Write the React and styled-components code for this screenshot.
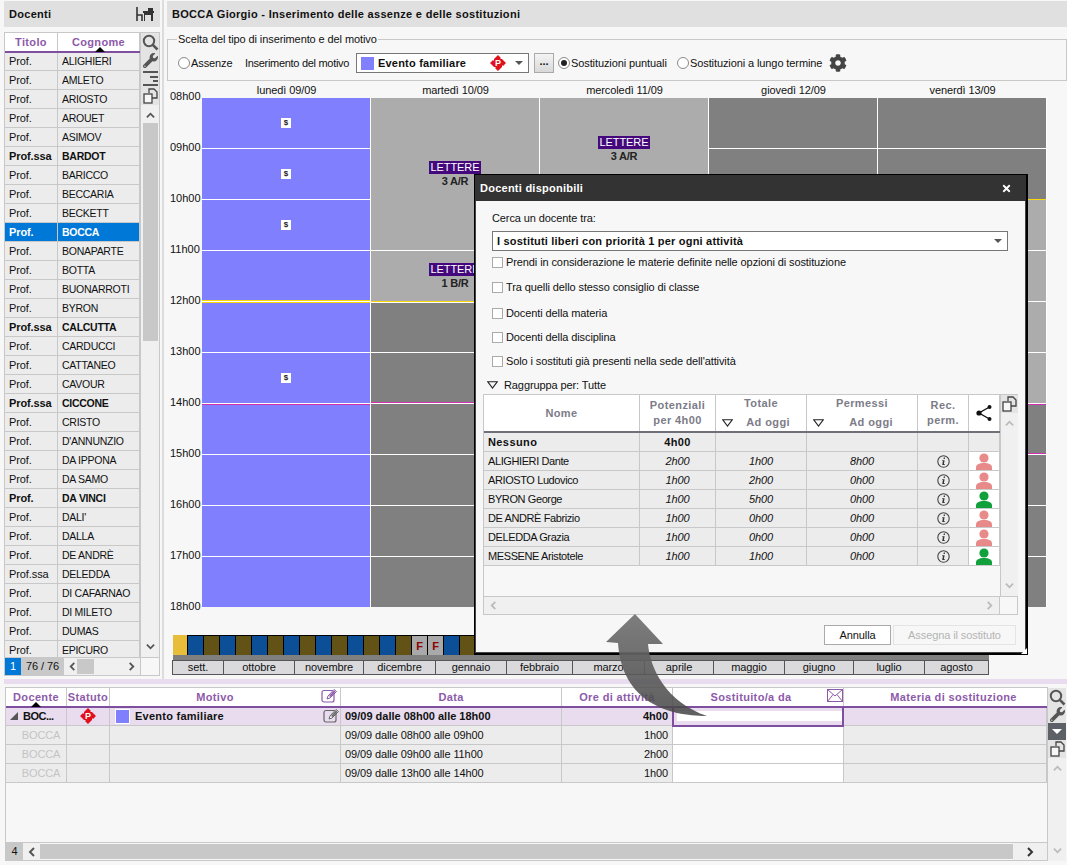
import React from 'react';
import styled, { createGlobalStyle } from 'styled-components';
import { FaWrench, FaCog, FaTimes } from 'react-icons/fa';

const GlobalStyle = createGlobalStyle`
  html, body {
    margin: 0;
    background: #f7f7f7;
  }
  * {
    box-sizing: border-box;
  }
  body {
    font-family: "Liberation Sans", Arial, sans-serif;
    font-size: 11px;
    letter-spacing: -0.1px;
    color: #111;
  }
`;

const PURPLE = '#7f4f9f';
const PURPLE_TEXT = '#8d5aaa';
const LINE = '#c8c8c8';
const ROW = '#ececec';

const Page = styled.div`
  position: relative;
  width: 1067px;
  height: 865px;
  overflow: hidden;
  background: #f7f7f7;
`;

const TopArea = styled.div`
  display: flex;
  height: 679px;
  padding-top: 1px;
`;

/* left list */
const LeftPanel = styled.div`
  width: 156px;
  margin-left: 4px;
  display: flex;
  flex-direction: column;
`;

const PanelTitle = styled.div`
  height: 26px;
  flex: none;
  background: #e0e0e0;
  display: flex;
  align-items: center;
  justify-content: space-between;
  padding: 0 6px 0 5px;
  font-weight: bold;
  letter-spacing: 0.3px;
`;

const ListFrame = styled.div`
  margin-top: 5px;
  height: 644px;
  flex: none;
  border: 1px solid ${LINE};
  display: flex;
  flex-direction: column;
`;

const ListMain = styled.div`
  flex: 1;
  display: flex;
  min-height: 0;
`;

const ListTable = styled.div`
  width: 136px;
  flex: none;
  overflow: hidden;
  border-right: 1px solid ${LINE};
`;

const ListHead = styled.div`
  position: relative;
  z-index: 1;
  display: grid;
  grid-template-columns: 53px 82px;
  height: 19px;
  background: #fff;
  border-bottom: 1px solid ${PURPLE};
  box-shadow: 0 1px 0 ${PURPLE};
`;

const HeadLabel = styled.div`
  position: relative;
  display: flex;
  align-items: center;
  justify-content: center;
  padding: 0 ${(p) => p.$pr || 0}px 0 ${(p) => p.$pl || 0}px;
  color: ${PURPLE_TEXT};
  border-right: 1px solid ${LINE};
  font-weight: bold;
  letter-spacing: 0.35px;
  white-space: nowrap;
`;

const SortCaret = styled.span`
  position: absolute;
  left: ${(p) => p.$left}px;
  bottom: -1px;
  width: 0;
  height: 0;
  border-left: 5px solid transparent;
  border-right: 5px solid transparent;
  border-bottom: 5px solid #000;
`;

const ListRow = styled.div`
  display: grid;
  grid-template-columns: 53px 82px;
  height: 19px;
  background: ${(p) => (p.$selected ? '#0078d7' : ROW)};
  color: ${(p) => (p.$selected ? '#fff' : '#111')};
  font-weight: ${(p) => (p.$bold || p.$selected ? 'bold' : 'normal')};
  border-bottom: 1px solid ${LINE};
`;

const ListCell = styled.div`
  padding-left: 4px;
  line-height: 18px;
  white-space: nowrap;
  overflow: hidden;
  border-right: 1px solid ${LINE};
`;

const NameCell = styled(ListCell)`
  font-size: 10.5px;
  letter-spacing: -0.27px;
`;

const SideColumn = styled.div`
  width: 18px;
  flex: none;
  display: flex;
  flex-direction: column;
`;

const SideButton = styled.div`
  height: ${(p) => p.$h || 18}px;
  flex: none;
  display: flex;
  align-items: center;
  justify-content: center;
  color: #555;
  background: ${(p) => (p.$dark ? '#5e6068' : '#e4e4e4')};
`;

const ScrollV = styled.div`
  flex: 1;
  display: flex;
  flex-direction: column;
  align-items: center;
  background: #f0f0f0;
  padding: 6px 0;
  min-height: 0;
`;

const ThumbV = styled.div`
  width: 15px;
  height: ${(p) => p.$h}px;
  margin-top: 3px;
  background: ${LINE};
`;

const Spacer = styled.div`
  flex: 1;
`;

const ListFooter = styled.div`
  height: 18px;
  flex: none;
  display: flex;
  align-items: stretch;
  border-top: 1px solid ${LINE};
`;

const PageNumber = styled.div`
  width: 16px;
  background: #0078d7;
  color: #fff;
  text-align: center;
  line-height: 17px;
`;

const PageCount = styled.div`
  width: 43px;
  background: ${LINE};
  text-align: center;
  line-height: 17px;
`;

const ScrollH = styled.div`
  flex: 1;
  display: flex;
  align-items: center;
  justify-content: space-between;
  padding: 0 4px;
  background: #f0f0f0;
  border-right: 1px solid ${LINE};
`;

const ThumbH = styled.div`
  width: 17px;
  height: 15px;
  background: ${LINE};
`;

const FooterEnd = styled.div`
  width: 18px;
  flex: none;
`;

const VSeparator = styled.div`
  width: 2px;
  margin: -1px 3px 0 2px;
  background: #dcdcdc;
`;

/* main column */
const MainPanel = styled.div`
  flex: 1;
  display: flex;
  flex-direction: column;
  min-width: 0;
`;

const GroupBox = styled.fieldset`
  margin: 5px 0 0;
  padding: 0 0 0 10px;
  height: 49px;
  flex: none;
  border: 1px solid ${LINE};
`;

const GroupLegend = styled.legend`
  padding: 0 1px;
  margin-left: -1px;
  line-height: 14px;
`;

const GroupRow = styled.div`
  display: flex;
  align-items: center;
  height: 22px;
  margin-top: 6px;
`;

const RadioMark = styled.span`
  width: 12px;
  height: 12px;
  flex: none;
  border-radius: 50%;
  border: 1px solid #8a8a8a;
  background: #fff;
  display: flex;
  align-items: center;
  justify-content: center;
  margin-right: 1px;
  margin-left: ${(p) => p.$ml || 0}px;
  &::after {
    content: '';
    width: 6px;
    height: 6px;
    border-radius: 50%;
    background: ${(p) => (p.$on ? '#222' : 'transparent')};
  }
`;

const InlineLabel = styled.span`
  width: ${(p) => p.$w}px;
  flex: none;
  letter-spacing: ${(p) => p.$spacing || '-0.1px'};
  white-space: nowrap;
`;

const SelectBox = styled.div`
  width: 173px;
  height: 20px;
  flex: none;
  background: #fff;
  border: 1px solid #777;
  display: flex;
  align-items: center;
  padding: 0 5px 0 4px;
  font-weight: bold;
  letter-spacing: 0.2px;
`;

const Swatch = styled.span`
  width: 13px;
  height: 13px;
  flex: none;
  background: #8080ff;
  margin-right: 4px;
  ${(p) => p.$framed && 'outline: 1px solid #fff;'}
`;

const SelectCaret = styled.span`
  width: 0;
  height: 0;
  margin-left: auto;
  border-left: 4px solid transparent;
  border-right: 4px solid transparent;
  border-top: 4px solid #555;
`;

const SelectCaretSlot = styled.span`
  margin-left: auto;
  display: flex;
  align-items: center;
  gap: 9px;
`;

const DotsButton = styled.div`
  width: 20px;
  height: 20px;
  flex: none;
  margin-left: 5px;
  border: 1px solid #aaa;
  background: linear-gradient(#f4f4f4, #d8d8d8);
  text-align: center;
  line-height: 14px;
  font-weight: bold;
`;

const GearSlot = styled.span`
  flex: none;
  display: flex;
`;

/* calendar */
const CalendarArea = styled.div`
  display: flex;
  flex: none;
  height: 523px;
  margin-top: 3px;
`;

const TimeColumn = styled.div`
  width: 35px;
  flex: none;
  padding: 5px 0 0 3px;
`;

const TimeLabel = styled.div`
  height: 51px;
  line-height: 14px;
  letter-spacing: 0;
`;

const DaysArea = styled.div`
  width: 845px;
  flex: none;
`;

const DayHeads = styled.div`
  display: grid;
  grid-template-columns: repeat(5, 169px);
  height: 14px;
  line-height: 13px;
  text-align: center;
`;

const DayGrid = styled.div`
  display: grid;
  grid-template-columns: repeat(5, 169px);
  height: 509px;
  overflow: hidden;
`;

const DayColumn = styled.div`
  display: flex;
  flex-direction: column;
  border-right: 1px solid #fff;
`;

const toneColors = { blue: '#8080ff', light: '#acacac', dark: '#808080' };

const CalBlock = styled.div`
  height: ${(p) => p.$hours * 51}px;
  flex: none;
  background: ${(p) => toneColors[p.$tone]};
  border-bottom: 1px solid ${(p) => p.$line || '#fff'};
  ${(p) => p.$top && `border-top: 1px solid ${p.$top};`}
  ${(p) => p.$above && `box-shadow: inset 0 -1px 0 ${p.$above};`}
  display: flex;
  flex-direction: column;
  align-items: center;
  justify-content: center;
`;

const MoneyTag = styled.span`
  width: 10px;
  height: 10px;
  background: #fff;
  color: #222;
  font-size: 8px;
  font-weight: bold;
  line-height: 10px;
  text-align: center;
`;

const SubjectTag = styled.span`
  background: #44087c;
  color: #fff;
  padding: 0 2px;
  height: 13px;
  line-height: 13px;
`;

const ClassLabel = styled.span`
  height: 13px;
  line-height: 14px;
  font-weight: bold;
  letter-spacing: -0.2px;
  color: #222;
`;

const TimelineSlot = styled.div`
  flex: none;
`;

const Timeline = styled.div`
  margin: 28px 0 0 5px;
  width: 817px;
`;

const WeekStrip = styled.div`
  display: flex;
  height: 20px;
  margin-left: 1px;
  background: #000;
  padding-top: 1px;
  overflow: hidden;
`;

const WeekStart = styled.div`
  width: 14px;
  margin-right: 1px;
  margin-top: -1px;
  flex: none;
  background: #e8bd3a;
`;

const WeekCell = styled.div`
  width: 15px;
  margin-right: 1px;
  flex: none;
  background: ${(p) => p.$bg};
  color: #8b0000;
  font-weight: bold;
  text-align: center;
  line-height: 20px;
`;

const WeekBar = styled.div`
  height: 5px;
  margin-left: 1px;
  background: #7f7f7f;
`;

const MonthRow = styled.div`
  display: grid;
  grid-template-columns: 51px 71px 69px 72px 71px 66px 72px 69px 71px 69px 71px 64px;
  height: 15px;
  border-top: 1px solid #555;
  border-bottom: 1px solid #555;
  border-left: 1px solid #555;
`;

const MonthCell = styled.div`
  background: #dadadd;
  border-right: 1px solid #555;
  text-align: center;
  line-height: 13px;
`;

const Divider = styled.div`
  height: 5px;
  background: #e8dcee;
  margin-left: 4px;
`;

/* lower table */
const BottomArea = styled.div`
  margin: 3px 0 0 5px;
  display: flex;
  height: 174px;
`;

const BottomMain = styled.div`
  width: 1043px;
  flex: none;
  display: flex;
  flex-direction: column;
  border: 1px solid ${LINE};
`;

const BOTTOM_COLS = '61px 43px 231px 221px 111px 171px 203px';

const BottomHead = styled.div`
  position: relative;
  z-index: 1;
  display: grid;
  grid-template-columns: ${BOTTOM_COLS};
  height: 19px;
  flex: none;
  background: #fff;
  border-bottom: 1px solid ${PURPLE};
  box-shadow: 0 1px 0 ${PURPLE};
`;

const BottomHeadCell = styled(HeadLabel)`
  &:last-child {
    border-right: 0;
  }
`;

const HeadIcon = styled.span`
  position: absolute;
  right: ${(p) => p.$right}px;
  top: 1px;
  display: flex;
`;

const BottomRow = styled.div`
  display: grid;
  grid-template-columns: ${BOTTOM_COLS};
  height: 19px;
  flex: none;
  background: ${(p) => (p.$active ? '#e8dcee' : ROW)};
  font-weight: ${(p) => (p.$active ? 'bold' : 'normal')};
  letter-spacing: ${(p) => (p.$active ? '0' : '-0.1px')};
  border-bottom: 1px solid ${LINE};
`;

const BottomCell = styled.div`
  position: relative;
  display: flex;
  align-items: center;
  justify-content: ${(p) => p.$justify || 'flex-start'};
  padding: 0 ${(p) => p.$padRight || 0}px 0 ${(p) => p.$pad || 0}px;
  border-right: 1px solid ${LINE};
  color: ${(p) => p.$color || 'inherit'};
  white-space: nowrap;
  overflow: hidden;
`;

const BlankCell = styled(BottomCell)`
  background: #fff;
`;

const SelectedCell = styled(BottomCell)`
  overflow: visible;
`;

const SelectedFrame = styled.div`
  position: absolute;
  z-index: 2;
  left: -1px;
  right: -1px;
  top: -1px;
  bottom: -2px;
  border: 2px solid ${PURPLE};
  padding: 3px 0 4px 3px;
  background: #e8dcee;
  &::after {
    content: '';
    display: block;
    height: 100%;
    background: #fff;
  }
`;

const RowArrow = styled.span`
  position: absolute;
  left: 4px;
  top: 5px;
  width: 0;
  height: 0;
  border-bottom: 8px solid #555;
  border-left: 8px solid transparent;
`;

const TruncatedName = styled.span`
  letter-spacing: -0.5px;
`;

const EventName = styled.span`
  margin-left: 2px;
  letter-spacing: 0.25px;
`;

const RowEdit = styled.span`
  position: absolute;
  right: 1px;
  top: 2px;
  display: flex;
`;

const EmptyArea = styled.div`
  flex: 1;
`;

const BottomScroll = styled.div`
  height: 18px;
  flex: none;
  display: flex;
  align-items: stretch;
  border-top: 1px solid ${LINE};
`;

const CountCell = styled.div`
  width: 17px;
  background: ${LINE};
  text-align: center;
  line-height: 17px;
`;

const ArrowCell = styled.div`
  width: ${(p) => p.$w || 17}px;
  flex: none;
  display: flex;
  align-items: center;
  justify-content: center;
  background: #f0f0f0;
`;

const TrackH = styled.div`
  flex: 1;
  margin: 1px 0;
  background: ${LINE};
`;

const BottomSide = styled.div`
  width: 18px;
  flex: none;
  display: flex;
  flex-direction: column;
  margin-top: 1px;
`;

const DarkCaret = styled.span`
  width: 0;
  height: 0;
  border-left: 5px solid transparent;
  border-right: 5px solid transparent;
  border-top: 5px solid #fff;
`;

/* dialog */
const Dialog = styled.div`
  position: absolute;
  left: 474px;
  top: 174px;
  width: 554px;
  height: 481px;
  display: flex;
  flex-direction: column;
  background: #f7f7f7;
  border: 1px solid #000;
  border-right-width: 2px;
  border-bottom-width: 2px;
  box-shadow: inset 0 0 0 1px #444;
`;

const DialogTitle = styled.div`
  height: 26px;
  flex: none;
  background: #333;
  color: #fff;
  font-weight: bold;
  letter-spacing: 0.25px;
  display: flex;
  align-items: center;
  justify-content: space-between;
  padding: 0 14px 0 5px;
`;

const DialogBody = styled.div`
  flex: 1;
  padding: 11px 0 0 8px;
  display: flex;
  flex-direction: column;
`;

const SearchLabel = styled.div`
  margin-left: 9px;
  height: 19px;
  line-height: 13px;
`;

const DialogSelect = styled(SelectBox)`
  width: 516px;
  margin-left: 9px;
`;

const CheckRow = styled.div`
  display: flex;
  align-items: center;
  height: ${(p) => p.$h}px;
  margin-left: 9px;
`;

const CheckMark = styled.span`
  width: 11px;
  height: 11px;
  flex: none;
  background: #fff;
  border: 1px solid #aaa;
  margin-right: 3px;
`;

const GroupToggle = styled.div`
  display: flex;
  align-items: center;
  height: 16px;
  margin: 4px 0 1px 4px;
`;

const HollowDown = styled.svg`
  flex: none;
  margin-right: ${(p) => p.$mr || 0}px;
`;

const ResultFrame = styled.div`
  width: 535px;
  height: 221px;
  flex: none;
  border: 1px solid ${LINE};
  display: flex;
  flex-direction: column;
`;

const ResultMain = styled.div`
  flex: 1;
  display: flex;
  min-height: 0;
`;

const ResultTable = styled.div`
  width: 516px;
  flex: none;
`;

const RESULT_COLS = '156px 76px 91px 111px 51px 31px';

const ResultHead = styled.div`
  display: grid;
  grid-template-columns: ${RESULT_COLS};
  height: 38px;
  background: #fff;
  border-bottom: 2px solid #6f6f78;
`;

const ResultHeadCell = styled.div`
  display: flex;
  flex-direction: column;
  align-items: center;
  justify-content: center;
  border-right: 1px solid ${LINE};
  color: #7c7c88;
  font-weight: bold;
  line-height: 15px;
  text-align: center;
  letter-spacing: 0.4px;
`;

const HeadSubRow = styled.div`
  display: flex;
  align-items: center;
  justify-content: space-between;
  width: 100%;
  padding: 0 ${(p) => p.$pr}px 0 6px;
  margin-top: 4px;
`;

const ResultRow = styled.div`
  display: grid;
  grid-template-columns: ${RESULT_COLS};
  height: 19px;
  background: ${ROW};
  border-bottom: 1px solid ${LINE};
  font-weight: ${(p) => (p.$bold ? 'bold' : 'normal')};
  letter-spacing: ${(p) => (p.$bold ? '0.4px' : '-0.1px')};
`;

const ResultCell = styled.div`
  display: flex;
  align-items: center;
  justify-content: center;
  font-style: ${(p) => (p.$italic ? 'italic' : 'normal')};
  background: ${(p) => (p.$white ? '#fff' : 'transparent')};
  border-right: 1px solid ${LINE};
`;

const ResultNameCell = styled(ResultCell)`
  justify-content: flex-start;
  padding-left: 4px;
  letter-spacing: ${(p) => (p.$bold ? '0.4px' : '-0.4px')};
`;

const ResultSide = styled.div`
  width: 18px;
  flex: none;
  display: flex;
  flex-direction: column;
  border-left: 1px solid ${LINE};
`;

const ResultScrollH = styled.div`
  height: 18px;
  flex: none;
  display: flex;
  border-top: 1px solid ${LINE};
`;

const ResultTrack = styled.div`
  width: 516px;
  flex: none;
  display: flex;
  align-items: center;
  justify-content: space-between;
  padding: 0 5px;
  background: #f0f0f0;
  border-right: 1px solid ${LINE};
`;

const DialogActions = styled.div`
  display: flex;
  justify-content: flex-end;
  gap: 2px;
  width: 533px;
  margin-top: 10px;
`;

const DialogButton = styled.div`
  width: ${(p) => p.$w}px;
  height: 20px;
  border: 1px solid ${(p) => (p.$disabled ? '#e4e4e4' : '#aaa')};
  color: ${(p) => (p.$disabled ? '#b4b4b4' : '#111')};
  background: ${(p) => (p.$disabled ? '#f7f7f7' : '#fff')};
  text-align: center;
  line-height: 18px;
`;

const ResizeGrip = styled.span`
  position: absolute;
  right: -1px;
  bottom: -1px;
  width: 0;
  height: 0;
  border-bottom: 6px solid #fff;
  border-left: 6px solid transparent;
`;

const BigArrow = styled.svg`
  position: absolute;
  left: 600px;
  top: 610px;
  z-index: 3;
  pointer-events: none;
`;

/* drawings */
const Chevron = ({ dir = 'up', color = '#555', size = 9 }) => {
  const points = {
    up: '1,7 5,3 9,7',
    down: '1,3 5,7 9,3',
    left: '7,1 3,5 7,9',
    right: '3,1 7,5 3,9',
  }[dir];
  return (
    <svg width={size} height={size} viewBox="0 0 10 10">
      <polyline points={points} fill="none" stroke={color} strokeWidth="2" />
    </svg>
  );
};

const SearchIcon = ({ size = 17 }) => (
  <svg width={size} height={size} viewBox="0 0 17 17">
    <circle cx="7" cy="7" r="5.2" fill="none" stroke="#555" strokeWidth="2" />
    <line x1="10.8" y1="10.8" x2="15.5" y2="15.5" stroke="#555" strokeWidth="2.6" />
  </svg>
);

const LinesIcon = () => (
  <svg width="17" height="16" viewBox="0 0 17 16">
    <rect x="1" y="1" width="15" height="2" fill="#555" />
    <rect x="8" y="6" width="8" height="2" fill="#555" />
    <rect x="11" y="10" width="5" height="2" fill="#555" />
    <rect x="1" y="14" width="15" height="2" fill="#555" />
  </svg>
);

const CopyIcon = () => (
  <svg width="15" height="16" viewBox="0 0 15 16">
    <path d="M6 5V1h5l3 3v6H9" fill="none" stroke="#444" strokeWidth="1.3" />
    <rect x="1" y="6" width="8" height="9" fill="#f7f7f7" stroke="#444" strokeWidth="1.3" />
  </svg>
);

const DeskIcon = () => (
  <svg width="18" height="15" viewBox="0 0 18 15">
    <path d="M1 0v14M1 8h5v6" fill="none" stroke="#333" strokeWidth="1.6" />
    <path d="M7 4h11v2h-1v8h-2V8h-6v6H8V6H7z" fill="#333" />
    <rect x="12" y="1" width="5" height="3" fill="#333" />
  </svg>
);

const StatusDiamond = () => (
  <svg width="16" height="16" viewBox="0 0 16 16">
    <path d="M8 0l3 3-1 1 2 0 4 4-3 3-1-1 0 2-4 4-3-3 1-1-2 0-4-4 3-3 1 1 0-2z" fill="#e0101c" />
    <circle cx="8" cy="7.5" r="4" fill="#e0101c" />
    <text x="8" y="11" textAnchor="middle" fontSize="9" fontWeight="bold" fill="#fff" fontFamily="Liberation Sans">P</text>
  </svg>
);

const PersonIcon = ({ color }) => (
  <svg width="16" height="17" viewBox="0 0 16 17">
    <circle cx="8" cy="5" r="4.6" fill={color} />
    <path d="M0 17v-2.5C0 11.5 3 10 8 10s8 1.500 8 4.500V17z" fill={color} />
  </svg>
);

const InfoIcon = () => (
  <svg width="13" height="13" viewBox="0 0 13 13">
    <circle cx="6.500" cy="6.500" r="5.700" fill="none" stroke="#444" strokeWidth="1.100" />
    <path d="M6.800 2.600h1.300l-.3 1.300H6.500zM5.300 5.200h2.300L6.900 9h.9l-.2.900H5.200L5.900 6H5.100z" fill="#333" />
  </svg>
);

const ShareIcon = () => (
  <svg width="16" height="18" viewBox="0 0 16 18">
    <path d="M13.500 3 3 9l10.500 6" fill="none" stroke="#111" strokeWidth="1.400" />
    <circle cx="13.500" cy="3" r="2" fill="#111" />
    <circle cx="3" cy="9" r="2.600" fill="#111" />
    <circle cx="13.500" cy="15" r="2" fill="#111" />
  </svg>
);

const EditIcon = ({ color }) => (
  <svg width="16" height="14" viewBox="0 0 16 14">
    <rect x="1" y="1.500" width="12" height="11.500" rx="2" fill="none" stroke={color} strokeWidth="1.200" />
    <path d="M6 10l1-3 6-6.500 2.500 2L9 9z" fill="#fff" stroke={color} strokeWidth="1" />
    <path d="M8 7l5-5.500 1.500 1.300L9.500 8z" fill={color} />
  </svg>
);

const MailIcon = () => (
  <svg width="16" height="13" viewBox="0 0 16 13">
    <rect x="0.500" y="0.500" width="15" height="12" fill="none" stroke={PURPLE_TEXT} />
    <path d="M.5.500 8 7l7.500-6.500M.5 12.500 6 5.500M15.500 12.500 10 5.500" fill="none" stroke={PURPLE_TEXT} />
  </svg>
);

const HollowTriangle = ({ mr }) => (
  <HollowDown width="11" height="8" viewBox="0 0 11 8" $mr={mr}>
    <path d="M.8.800h9.400L5.500 7z" fill="none" stroke="#222" strokeWidth="1.100" />
  </HollowDown>
);

/* data */
const teachers = [
  ['Prof.', 'ALIGHIERI'], ['Prof.', 'AMLETO'], ['Prof.', 'ARIOSTO'], ['Prof.', 'AROUET'],
  ['Prof.', 'ASIMOV'], ['Prof.ssa', 'BARDOT', true], ['Prof.', 'BARICCO'], ['Prof.', 'BECCARIA'],
  ['Prof.', 'BECKETT'], ['Prof.', 'BOCCA', true], ['Prof.', 'BONAPARTE'], ['Prof.', 'BOTTA'],
  ['Prof.', 'BUONARROTI'], ['Prof.', 'BYRON'], ['Prof.ssa', 'CALCUTTA', true], ['Prof.', 'CARDUCCI'],
  ['Prof.', 'CATTANEO'], ['Prof.', 'CAVOUR'], ['Prof.ssa', 'CICCONE', true], ['Prof.', 'CRISTO'],
  ['Prof.', "D'ANNUNZIO"], ['Prof.', 'DA IPPONA'], ['Prof.', 'DA SAMO'], ['Prof.', 'DA VINCI', true],
  ['Prof.', "DALI'"], ['Prof.', 'DALLA'], ['Prof.', 'DE ANDRÈ'], ['Prof.ssa', 'DELEDDA'],
  ['Prof.', 'DI CAFARNAO'], ['Prof.', 'DI MILETO'], ['Prof.', 'DUMAS'], ['Prof.', 'EPICURO'],
];

const hourLabels = ['08h00', '09h00', '10h00', '11h00', '12h00', '13h00', '14h00', '15h00', '16h00', '17h00', '18h00'];

const PINK = '#d030b0';
const YELLOW = '#f8d70c';

const days = [
  {
    label: 'lunedì 09/09',
    blocks: [
      { hours: 1, tone: 'blue', money: true }, { hours: 1, tone: 'blue', money: true },
      { hours: 1, tone: 'blue', money: true }, { hours: 1, tone: 'blue', above: YELLOW },
      { hours: 1, tone: 'blue', top: YELLOW }, { hours: 1, tone: 'blue', money: true },
      { hours: 1, tone: 'blue', top: PINK }, { hours: 1, tone: 'blue' },
      { hours: 1, tone: 'blue' }, { hours: 1, tone: 'blue' },
    ],
  },
  {
    label: 'martedì 10/09',
    blocks: [
      { hours: 3, tone: 'light', subject: 'LETTERE', group: '3 A/R' },
      { hours: 1, tone: 'light', subject: 'LETTERE', group: '1 B/R', line: YELLOW },
      { hours: 1, tone: 'dark', top: '#fff' }, { hours: 1, tone: 'dark', above: PINK },
      { hours: 1, tone: 'dark' }, { hours: 1, tone: 'dark' },
      { hours: 1, tone: 'dark' }, { hours: 1, tone: 'dark' },
    ],
  },
  {
    label: 'mercoledì 11/09',
    blocks: [
      { hours: 2, tone: 'light', subject: 'LETTERE', group: '3 A/R' },
      { hours: 8, tone: 'dark' },
    ],
  },
  {
    label: 'giovedì 12/09',
    blocks: [{ hours: 1, tone: 'dark' }, { hours: 9, tone: 'dark' }],
  },
  {
    label: 'venerdì 13/09',
    blocks: [
      { hours: 1, tone: 'dark' }, { hours: 1, tone: 'dark', line: YELLOW },
      { hours: 1, tone: 'light' }, { hours: 1, tone: 'light' },
      { hours: 1, tone: 'light' }, { hours: 1, tone: 'light' },
      { hours: 1, tone: 'dark', top: PINK, above: PINK }, { hours: 1, tone: 'dark' },
      { hours: 1, tone: 'dark' }, { hours: 1, tone: 'dark' },
    ],
  },
];

const weeks = Array.from({ length: 50 }, (_, i) => i);
const months = ['sett.', 'ottobre', 'novembre', 'dicembre', 'gennaio', 'febbraio', 'marzo', 'aprile', 'maggio', 'giugno', 'luglio', 'agosto'];

const substitutes = [
  ['ALIGHIERI Dante', '2h00', '1h00', '8h00', false],
  ['ARIOSTO Ludovico', '1h00', '2h00', '0h00', false],
  ['BYRON George', '1h00', '5h00', '0h00', true],
  ['DE ANDRÈ Fabrizio', '1h00', '0h00', '0h00', false],
  ['DELEDDA Grazia', '1h00', '0h00', '0h00', false],
  ['MESSENE Aristotele', '1h00', '1h00', '0h00', true],
];

const checks = [
  ['Prendi in considerazione le materie definite nelle opzioni di sostituzione', 22],
  ['Tra quelli dello stesso consiglio di classe', 28],
  ['Docenti della materia', 24],
  ['Docenti della disciplina', 24],
  ["Solo i sostituti già presenti nella sede dell'attività", 24],
];

const absences = [
  ['09/09 dalle 08h00 alle 09h00', '1h00'],
  ['09/09 dalle 09h00 alle 11h00', '2h00'],
  ['09/09 dalle 13h00 alle 14h00', '1h00'],
];

function TeacherList() {
  return (
    <LeftPanel>
      <PanelTitle>
        Docenti
        <DeskIcon />
      </PanelTitle>
      <ListFrame>
        <ListMain>
          <ListTable>
            <ListHead>
              <HeadLabel>Titolo</HeadLabel>
              <HeadLabel>
                Cognome
                <SortCaret $left={37} />
              </HeadLabel>
            </ListHead>
            {teachers.map(([title, name, bold]) => (
              <ListRow key={name} $bold={bold} $selected={name === 'BOCCA'}>
                <ListCell>{title}</ListCell>
                <NameCell>{name}</NameCell>
              </ListRow>
            ))}
          </ListTable>
          <SideColumn>
            <SideButton><SearchIcon /></SideButton>
            <SideButton><FaWrench size={15} /></SideButton>
            <SideButton><LinesIcon /></SideButton>
            <SideButton><CopyIcon /></SideButton>
            <ScrollV>
              <Chevron dir="up" />
              <ThumbV $h={218} />
              <Spacer />
              <Chevron dir="down" />
            </ScrollV>
          </SideColumn>
        </ListMain>
        <ListFooter>
          <PageNumber>1</PageNumber>
          <PageCount>76 / 76</PageCount>
          <ScrollH>
            <Chevron dir="left" />
            <ThumbH />
            <Spacer />
            <Chevron dir="right" />
          </ScrollH>
          <FooterEnd />
        </ListFooter>
      </ListFrame>
    </LeftPanel>
  );
}

function CalendarDay({ day }) {
  return (
    <DayColumn>
      {day.blocks.map((block, index) => (
        <CalBlock
          key={index}
          $hours={block.hours}
          $tone={block.tone}
          $line={block.line}
          $top={block.top}
          $above={block.above}
        >
          {block.money && <MoneyTag>$</MoneyTag>}
          {block.subject && <SubjectTag>{block.subject}</SubjectTag>}
          {block.group && <ClassLabel>{block.group}</ClassLabel>}
        </CalBlock>
      ))}
    </DayColumn>
  );
}

function AbsencePanel() {
  return (
    <MainPanel>
      <PanelTitle>BOCCA Giorgio - Inserimento delle assenze e delle sostituzioni</PanelTitle>
      <GroupBox>
        <GroupLegend>Scelta del tipo di inserimento e del motivo</GroupLegend>
        <GroupRow>
          <RadioMark />
          <InlineLabel $w={54}>Assenze</InlineLabel>
          <InlineLabel $w={111} $spacing="-0.3px">Inserimento del motivo</InlineLabel>
          <SelectBox>
            <Swatch />
            Evento familiare
            <SelectCaretSlot>
              <StatusDiamond />
              <SelectCaret />
            </SelectCaretSlot>
          </SelectBox>
          <DotsButton>...</DotsButton>
          <RadioMark $on $ml={4} />
          <InlineLabel $w={106}>Sostituzioni puntuali</InlineLabel>
          <RadioMark />
          <InlineLabel $w={139}>Sostituzioni a lungo termine</InlineLabel>
          <GearSlot><FaCog size={18} color="#444" /></GearSlot>
        </GroupRow>
      </GroupBox>
      <CalendarArea>
        <TimeColumn>
          {hourLabels.map((hour) => (
            <TimeLabel key={hour}>{hour}</TimeLabel>
          ))}
        </TimeColumn>
        <DaysArea>
          <DayHeads>
            {days.map((day) => (
              <div key={day.label}>{day.label}</div>
            ))}
          </DayHeads>
          <DayGrid>
            {days.map((day) => (
              <CalendarDay key={day.label} day={day} />
            ))}
          </DayGrid>
        </DaysArea>
      </CalendarArea>
      <TimelineSlot>
        <Timeline>
          <WeekStrip>
            <WeekStart />
            {weeks.map((week) => {
              const holiday = week === 14 || week === 15;
              const bg = holiday ? '#a9a9a9' : week % 2 === 0 ? '#0d4f97' : '#635215';
              return (
                <WeekCell key={week} $bg={bg}>{holiday ? 'F' : ''}</WeekCell>
              );
            })}
          </WeekStrip>
          <WeekBar />
          <MonthRow>
            {months.map((month) => (
              <MonthCell key={month}>{month}</MonthCell>
            ))}
          </MonthRow>
        </Timeline>
      </TimelineSlot>
    </MainPanel>
  );
}

function LowerTable() {
  return (
    <BottomArea>
      <BottomMain>
        <BottomHead>
          <BottomHeadCell>
            Docente
            <SortCaret $left={25} />
          </BottomHeadCell>
          <BottomHeadCell>Statuto</BottomHeadCell>
          <BottomHeadCell $pr={20}>
            Motivo
            <HeadIcon $right={3}><EditIcon color={PURPLE_TEXT} /></HeadIcon>
          </BottomHeadCell>
          <BottomHeadCell>Data</BottomHeadCell>
          <BottomHeadCell>Ore di attività</BottomHeadCell>
          <BottomHeadCell $pr={14}>
            Sostituito/a da
            <HeadIcon $right={0}><MailIcon /></HeadIcon>
          </BottomHeadCell>
          <BottomHeadCell $pl={16}>Materia di sostituzione</BottomHeadCell>
        </BottomHead>
        <BottomRow $active>
          <BottomCell $pad={17}>
            <RowArrow />
            <TruncatedName>BOC...</TruncatedName>
          </BottomCell>
          <BottomCell $justify="center"><StatusDiamond /></BottomCell>
          <BottomCell $pad={6}>
            <Swatch $framed />
            <EventName>Evento familiare</EventName>
            <RowEdit><EditIcon color="#666" /></RowEdit>
          </BottomCell>
          <BottomCell $pad={4}>09/09 dalle 08h00 alle 18h00</BottomCell>
          <BottomCell $justify="flex-end" $padRight={4}>4h00</BottomCell>
          <SelectedCell><SelectedFrame /></SelectedCell>
          <BottomCell />
        </BottomRow>
        {absences.map(([period, duration]) => (
          <BottomRow key={period}>
            <BottomCell $justify="center" $pad={10} $color="#c4c4c4">BOCCA</BottomCell>
            <BottomCell />
            <BottomCell />
            <BottomCell $pad={4}>{period}</BottomCell>
            <BottomCell $justify="flex-end" $padRight={4}>{duration}</BottomCell>
            <BlankCell />
            <BottomCell />
          </BottomRow>
        ))}
        <EmptyArea />
        <BottomScroll>
          <CountCell>4</CountCell>
          <ArrowCell><Chevron dir="left" size={10} /></ArrowCell>
          <TrackH />
          <ArrowCell $w={34}><Chevron dir="right" size={10} color="#333" /></ArrowCell>
        </BottomScroll>
      </BottomMain>
      <BottomSide>
        <SideButton><SearchIcon /></SideButton>
        <SideButton $h={17}><FaWrench size={15} /></SideButton>
        <SideButton $dark $h={17}><DarkCaret /></SideButton>
        <SideButton $h={18}><CopyIcon /></SideButton>
        <ScrollV>
          <Chevron dir="up" color="#bbb" />
          <Spacer />
          <Chevron dir="down" color="#bbb" />
        </ScrollV>
        <FooterEnd />
      </BottomSide>
    </BottomArea>
  );
}

function SubstituteDialog() {
  return (
    <Dialog>
      <DialogTitle>
        Docenti disponibili
        <FaTimes size={11} color="#fff" />
      </DialogTitle>
      <DialogBody>
        <SearchLabel>Cerca un docente tra:</SearchLabel>
        <DialogSelect>
          I sostituti liberi con priorità 1 per ogni attività
          <SelectCaret />
        </DialogSelect>
        {checks.map(([label, height]) => (
          <CheckRow key={label} $h={height}>
            <CheckMark />
            {label}
          </CheckRow>
        ))}
        <GroupToggle>
          <HollowTriangle mr={6} />
          Raggruppa per: Tutte
        </GroupToggle>
        <ResultFrame>
          <ResultMain>
            <ResultTable>
              <ResultHead>
                <ResultHeadCell>Nome</ResultHeadCell>
                <ResultHeadCell>Potenziali<br />per 4h00</ResultHeadCell>
                <ResultHeadCell>
                  Totale
                  <HeadSubRow $pr={16}><HollowTriangle />Ad oggi</HeadSubRow>
                </ResultHeadCell>
                <ResultHeadCell>
                  Permessi
                  <HeadSubRow $pr={24}><HollowTriangle />Ad oggi</HeadSubRow>
                </ResultHeadCell>
                <ResultHeadCell>Rec.<br />perm.</ResultHeadCell>
                <ResultHeadCell><ShareIcon /></ResultHeadCell>
              </ResultHead>
              <ResultRow $bold>
                <ResultNameCell $bold>Nessuno</ResultNameCell>
                <ResultCell>4h00</ResultCell>
                <ResultCell />
                <ResultCell />
                <ResultCell />
                <ResultCell />
              </ResultRow>
              {substitutes.map(([name, potential, total, permits, free]) => (
                <ResultRow key={name}>
                  <ResultNameCell>{name}</ResultNameCell>
                  <ResultCell $italic>{potential}</ResultCell>
                  <ResultCell $italic>{total}</ResultCell>
                  <ResultCell $italic>{permits}</ResultCell>
                  <ResultCell><InfoIcon /></ResultCell>
                  <ResultCell $white><PersonIcon color={free ? '#12a03c' : '#e88a8a'} /></ResultCell>
                </ResultRow>
              ))}
            </ResultTable>
            <ResultSide>
              <SideButton><CopyIcon /></SideButton>
              <ScrollV>
                <Chevron dir="up" color="#bbb" />
                <Spacer />
                <Chevron dir="down" color="#bbb" />
              </ScrollV>
            </ResultSide>
          </ResultMain>
          <ResultScrollH>
            <ResultTrack>
              <Chevron dir="left" color="#bbb" />
              <Chevron dir="right" color="#bbb" />
            </ResultTrack>
          </ResultScrollH>
        </ResultFrame>
        <DialogActions>
          <DialogButton $w={67}>Annulla</DialogButton>
          <DialogButton $w={123} $disabled>Assegna il sostituto</DialogButton>
        </DialogActions>
      </DialogBody>
      <ResizeGrip />
    </Dialog>
  );
}

export default function App() {
  return (
    <Page>
      <GlobalStyle />
      <TopArea>
        <TeacherList />
        <VSeparator />
        <AbsencePanel />
      </TopArea>
      <Divider />
      <LowerTable />
      <SubstituteDialog />
      <BigArrow width="120" height="120" viewBox="600 610 120 120">
        <defs>
          <linearGradient id="arrowFill" x1="0" y1="0" x2="0" y2="1">
            <stop offset="0" stopColor="#777" stopOpacity="0.95" />
            <stop offset="1" stopColor="#444" stopOpacity="0.85" />
          </linearGradient>
        </defs>
        <path
          d="M635 614 L663 644 L648 644 C650 668 666 702 707 716 C668 716 622 702 618 643 L606 642 Z"
          fill="url(#arrowFill)"
        />
      </BigArrow>
    </Page>
  );
}
